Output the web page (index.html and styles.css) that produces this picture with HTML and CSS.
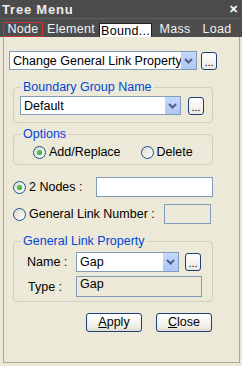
FILE: index.html
```html
<!DOCTYPE html>
<html lang="en">
<head>
    <meta charset="UTF-8">
    <meta name="viewport" content="width=device-width, initial-scale=1.0">
    <title>Tree Menu</title>
    <link rel="stylesheet" href="styles.css">
</head>
<body>
    <div class="window">
        <div class="titlebar">
            <span class="title">Tree Menu</span>
            <span class="close">&#x2715;</span>
        </div>

        <div class="tabs">
            <div class="tab tab-node">Node</div>
            <div class="tab tab-element">Element</div>
            <div class="tab tab-bound active">Bound...</div>
            <div class="tab tab-mass">Mass</div>
            <div class="tab tab-load">Load</div>
        </div>

        <div class="panel">
            <!-- Fonction -->
            <div class="row row-func">
                <div class="combo combo-func">
                    <span class="combo-text">Change General Link Property</span>
                    <span class="combo-arrow">
                        <svg width="15" height="17" viewBox="0 0 15 17"><path d="M4 7 L7.5 10.5 L11 7" fill="none" stroke="#4d6185" stroke-width="2"/></svg>
                    </span>
                </div>
                <span class="dots">...</span>
            </div>

            <fieldset class="group group-boundary">
                <legend>Boundary Group Name</legend>
                <div class="row">
                    <div class="combo combo-group">
                        <span class="combo-text">Default</span>
                        <span class="combo-arrow">
                            <svg width="15" height="17" viewBox="0 0 15 17"><path d="M4 7 L7.5 10.5 L11 7" fill="none" stroke="#4d6185" stroke-width="2"/></svg>
                        </span>
                    </div>
                    <span class="dots">...</span>
                </div>
            </fieldset>

            <fieldset class="group group-options">
                <legend>Options</legend>
                <div class="radio-row">
                    <span class="radio checked"><span class="radio-dot"></span>Add/Replace</span>
                    <span class="radio radio-delete"><span class="radio-dot"></span>Delete</span>
                </div>
            </fieldset>

            <div class="row row-nodes">
                <span class="radio checked radio-nodes"><span class="radio-dot"></span>2 Nodes :</span>
                <span class="textbox textbox-nodes"></span>
            </div>

            <div class="row row-number">
                <span class="radio radio-number"><span class="radio-dot"></span>General Link Number :</span>
                <span class="textbox textbox-number"></span>
            </div>

            <fieldset class="group group-property">
                <legend>General Link Property</legend>
                <div class="row">
                    <span class="field-label">Name :</span>
                    <div class="combo combo-name">
                        <span class="combo-text">Gap</span>
                        <span class="combo-arrow">
                            <svg width="15" height="17" viewBox="0 0 15 17"><path d="M4 7 L7.5 10.5 L11 7" fill="none" stroke="#4d6185" stroke-width="2"/></svg>
                        </span>
                    </div>
                    <span class="dots">...</span>
                </div>
                <div class="row row-type">
                    <span class="field-label">Type :</span>
                    <span class="readonly">Gap</span>
                </div>
            </fieldset>

            <div class="actions">
                <span class="btn"><u>A</u>pply</span>
                <span class="btn btn-close"><u>C</u>lose</span>
            </div>
        </div>
    </div>
</body>
</html>
```

FILE: styles.css
```css
body {
    margin: 0;
    padding: 0;
    font-family: 'Liberation Sans', Arial, sans-serif;
    font-size: 12.5px;
    color: #000;
    background-color: #ece9d8;
}

.window {
    width: 242px;
    height: 366px;
    background-color: #ece9d8;
    overflow: hidden;
}

/* Barre de titre */
.titlebar {
    height: 18px;
    background-color: #4b4b4b;
    display: flex;
    align-items: center;
    justify-content: space-between;
    padding: 0 4px 0 2px;
}

.title {
    color: #ececec;
    font-weight: bold;
    font-size: 13px;
    letter-spacing: 0.8px;
}

.close {
    color: #fff;
    font-weight: bold;
    font-size: 11px;
}

/* Onglets */
.tabs {
    height: 19px;
    background-color: #4d4d4d;
    border-top: 1px solid #5d5d5d;
    box-sizing: border-box;
    display: flex;
    align-items: flex-end;
}

.tab {
    height: 15px;
    line-height: 15px;
    text-align: center;
    color: #f2f2f2;
    box-sizing: border-box;
    letter-spacing: 0.3px;
}

.tab-node {
    margin-left: 3px;
    width: 40px;
    line-height: 13px;
    border: 1px solid #c83232;
}

.tab-element { width: 56px; }

.tab-bound {
    width: 53px;
    height: 14px;
    line-height: 14px;
    background-color: #fff;
    color: #000;
    border: 1px solid #222;
    border-bottom: none;
}

.tab-mass { width: 46px; }
.tab-load { width: 38px; }

/* Panneau principal */
.panel {
    height: 326px;
    margin: 0 2px 0 3px;
    border: 1px solid #a8a89c;
    border-top: none;
    box-sizing: border-box;
    padding-top: 14px;
}

.row {
    display: flex;
    align-items: center;
}

.row-func {
    margin-left: 5px;
}

/* Listes déroulantes */
.combo {
    height: 19px;
    background-color: #fff;
    border: 1px solid #7f9db9;
    box-sizing: border-box;
    display: flex;
    align-items: center;
    overflow: hidden;
}

.combo-text {
    flex: 1;
    padding-left: 3px;
    white-space: nowrap;
    overflow: hidden;
}

.combo-arrow {
    width: 15px;
    height: 17px;
    background: linear-gradient(#c6d7fc, #b1c6f6);
    display: flex;
}

.combo-func { width: 188px; }
.combo-group { width: 161px; }
.combo-name { width: 103px; height: 20px; }

.combo-name .combo-arrow { height: 18px; }

.dots {
    width: 16px;
    height: 18px;
    margin-left: 4px;
    border: 1px solid #1c3f74;
    border-radius: 3px;
    background: linear-gradient(#ffffff, #ece9e0);
    box-sizing: border-box;
    font-size: 11px;
    line-height: 18px;
    text-align: center;
}

.group-boundary .dots { margin-left: 7px; }
.group-property .dots { margin-left: 6px; }

/* Cadres de groupe */
.group {
    margin: 0 0 0 9px;
    width: 200px;
    box-sizing: border-box;
    border: 1px solid #d0d0bf;
    border-radius: 4px;
    min-width: 0;
    padding-left: 6px;
    padding-right: 0;
}

.group legend {
    color: #0046d5;
    line-height: 15px;
    padding: 0 2px;
    margin-left: 1px;
}

.group-boundary {
    margin-top: 10px;
    padding-top: 1px;
    padding-bottom: 7px;
}

.group-options {
    margin-top: 4px;
    padding-top: 2px;
    padding-bottom: 4px;
}

.group-property {
    margin-top: 10px;
    padding-top: 3px;
    padding-bottom: 4px;
}

.group-property .row {
    margin-left: 7px;
}

/* Boutons radio */
.radio-row {
    display: flex;
    height: 16px;
    align-items: center;
    margin-left: 13px;
}

.radio {
    display: flex;
    align-items: center;
    white-space: nowrap;
}

.radio-dot {
    width: 13px;
    height: 13px;
    margin-right: 3px;
    border: 1px solid #1c5180;
    border-radius: 50%;
    box-sizing: border-box;
    background: linear-gradient(135deg, #dcd9cf, #ffffff);
    display: flex;
    align-items: center;
    justify-content: center;
}

.radio.checked .radio-dot::after {
    content: "";
    width: 5px;
    height: 5px;
    border-radius: 50%;
    background: radial-gradient(circle at 40% 40%, #5ad05a, #1b9a1b);
}

.radio-delete {
    margin-left: 20px;
}

/* Lignes de saisie */
.row-nodes {
    margin: 12px 0 0 9px;
}

.row-number {
    margin: 7px 0 0 9px;
}

.textbox {
    height: 20px;
    background-color: #fff;
    border: 1px solid #7f9db9;
    box-sizing: border-box;
}

.textbox-nodes {
    width: 117px;
    margin-left: 13px;
}

.textbox-number {
    width: 47px;
    margin-left: 9px;
    background-color: #ece9d8;
}

.field-label {
    width: 49px;
    white-space: nowrap;
}

.group-property .row-type {
    margin-top: 4px;
}

.row-type .field-label {
    padding-left: 1px;
    width: 48px;
}

.readonly {
    width: 126px;
    height: 21px;
    border: 1px solid #7f9db9;
    box-sizing: border-box;
    background-color: #ece9d8;
    padding-left: 3px;
    line-height: 15px;
}

/* Boutons */
.actions {
    display: flex;
    justify-content: flex-end;
    width: 208px;
    margin-top: 11px;
}

.btn {
    width: 56px;
    height: 19px;
    border: 1px solid #1c3f74;
    border-radius: 3px;
    background: linear-gradient(#ffffff, #f0efe8 70%, #dedbd0);
    box-sizing: border-box;
    text-align: center;
    line-height: 17px;
}

.btn-close {
    margin-left: 14px;
}
```
